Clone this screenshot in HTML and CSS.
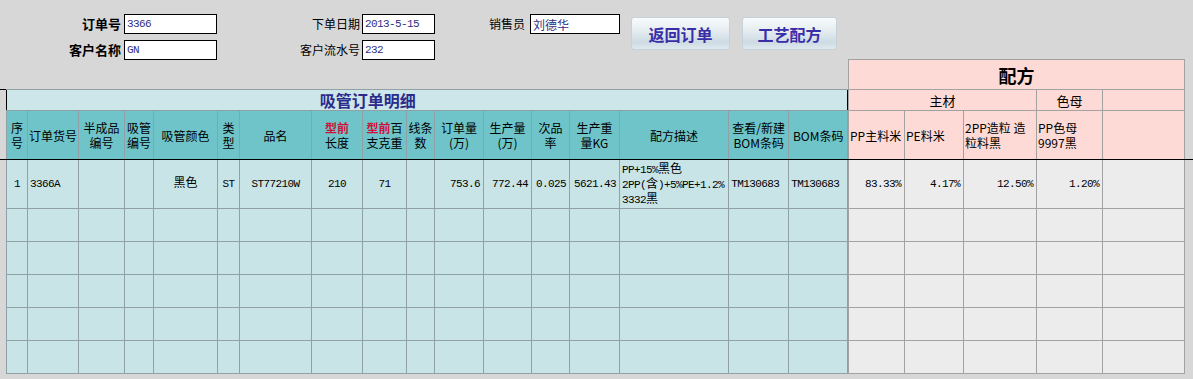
FILE: index.html
```html
<!DOCTYPE html>
<html lang="zh-CN">
<head>
  <meta charset="UTF-8">
  <title>吸管订单明细</title>
  <link rel="stylesheet" href="styles.css">
</head>
<body>
  <div class="sheet">
    <div class="left-pane">
      <div class="order-form">
        <div class="field-group group-main">
          <label class="bold">订单号</label>
          <input class="field" type="text" value="3366">
          <label class="bold">客户名称</label>
          <input class="field" type="text" value="GN">
        </div>
        <div class="field-group group-date">
          <label>下单日期</label>
          <input class="field" type="text" value="2013-5-15">
          <label>客户流水号</label>
          <input class="field" type="text" value="232">
        </div>
        <div class="field-group group-sales">
          <label>销售员</label>
          <input class="field cn-field" type="text" value="刘德华">
        </div>
        <div class="btn-group">
          <button class="btn btn-back">返回订单</button>
          <button class="btn btn-recipe">工艺配方</button>
        </div>
      </div>

      <table class="grid order-grid">
        <colgroup>
          <col style="width:21px"><col style="width:51px"><col style="width:46px"><col style="width:29px">
          <col style="width:64px"><col style="width:22px"><col style="width:72px"><col style="width:51px">
          <col style="width:44px"><col style="width:28px"><col style="width:49px"><col style="width:48px">
          <col style="width:38px"><col style="width:50px"><col style="width:109px"><col style="width:60px">
          <col style="width:59px">
        </colgroup>
        <tr class="title-row">
          <td colspan="15" class="grid-title">吸管订单明细</td>
          <td colspan="2"></td>
        </tr>
        <tr class="head-row">
          <th>序<br>号</th>
          <th>订单货号</th>
          <th>半成品<br>编号</th>
          <th>吸管<br>编号</th>
          <th>吸管颜色</th>
          <th>类<br>型</th>
          <th>品名</th>
          <th><b class="red">型前</b><br>长度</th>
          <th><b class="red">型前</b>百<br>支克重</th>
          <th>线条<br>数</th>
          <th>订单量<br>(万)</th>
          <th>生产量<br>(万)</th>
          <th>次品<br>率</th>
          <th>生产重<br>量KG</th>
          <th>配方描述</th>
          <th>查看/新建<br>BOM条码</th>
          <th>BOM条码</th>
        </tr>
        <tr class="data-row">
          <td class="c">1</td>
          <td class="l">3366A</td>
          <td></td>
          <td></td>
          <td class="c"><span class="cn">黑色</span></td>
          <td class="c">ST</td>
          <td class="c">ST77210W</td>
          <td class="c">210</td>
          <td class="c">71</td>
          <td></td>
          <td class="r">753.6</td>
          <td class="r">772.44</td>
          <td class="r">0.025</td>
          <td class="r">5621.43</td>
          <td class="l">
            <div class="desc-line">PP+15%<span class="cn">黑色</span></div>
            <div class="desc-line">2PP(<span class="cn">含</span>)+5%PE+1.2%</div>
            <div class="desc-line">3332<span class="cn">黑</span></div>
          </td>
          <td class="l">TM130683</td>
          <td class="l">TM130683</td>
        </tr>
        <tr class="empty-row"><td></td><td></td><td></td><td></td><td></td><td></td><td></td><td></td><td></td><td></td><td></td><td></td><td></td><td></td><td></td><td></td><td></td></tr>
        <tr class="empty-row"><td></td><td></td><td></td><td></td><td></td><td></td><td></td><td></td><td></td><td></td><td></td><td></td><td></td><td></td><td></td><td></td><td></td></tr>
        <tr class="empty-row"><td></td><td></td><td></td><td></td><td></td><td></td><td></td><td></td><td></td><td></td><td></td><td></td><td></td><td></td><td></td><td></td><td></td></tr>
        <tr class="empty-row"><td></td><td></td><td></td><td></td><td></td><td></td><td></td><td></td><td></td><td></td><td></td><td></td><td></td><td></td><td></td><td></td><td></td></tr>
        <tr class="empty-row"><td></td><td></td><td></td><td></td><td></td><td></td><td></td><td></td><td></td><td></td><td></td><td></td><td></td><td></td><td></td><td></td><td></td></tr>
      </table>
    </div>

    <div class="right-pane">
      <table class="grid recipe-grid">
        <colgroup>
          <col style="width:56px"><col style="width:59px"><col style="width:73px"><col style="width:66px"><col style="width:82px">
        </colgroup>
        <tr class="recipe-title">
          <td colspan="5">配方</td>
        </tr>
        <tr class="group-row">
          <td colspan="3">主材</td>
          <td>色母</td>
          <td></td>
        </tr>
        <tr class="head-row">
          <th>PP主料米</th>
          <th>PE料米</th>
          <th>2PP造粒 造<br>粒料黑</th>
          <th>PP色母<br>9997黑</th>
          <th></th>
        </tr>
        <tr class="data-row">
          <td class="r">83.33%</td>
          <td class="r">4.17%</td>
          <td class="r">12.50%</td>
          <td class="r">1.20%</td>
          <td></td>
        </tr>
        <tr class="empty-row"><td></td><td></td><td></td><td></td><td></td></tr>
        <tr class="empty-row"><td></td><td></td><td></td><td></td><td></td></tr>
        <tr class="empty-row"><td></td><td></td><td></td><td></td><td></td></tr>
        <tr class="empty-row"><td></td><td></td><td></td><td></td><td></td></tr>
        <tr class="empty-row"><td></td><td></td><td></td><td></td><td></td></tr>
      </table>
    </div>
  </div>
</body>
</html>
```

FILE: styles.css
```css
body {
  margin: 0;
  width: 1193px;
  height: 379px;
  overflow: hidden;
  font-family: "Noto Sans CJK SC", sans-serif;
  font-size: 12px;
  color: #000;
  background:
    linear-gradient(#000, #000) 0 89px / 6px 1px no-repeat,
    linear-gradient(#000, #000) 0 159px / 100% 1px no-repeat,
    #d7d7d7;
}

.sheet {
  display: flex;
  align-items: flex-start;
}

.left-pane {
  width: 848px;
  flex: none;
}
.right-pane {
  flex: none;
  margin-top: 59px;
}

/* top form */
.order-form {
  height: 89px;
  box-sizing: border-box;
  padding-top: 14px;
  display: flex;
  align-items: flex-start;
}
.field-group {
  display: grid;
  row-gap: 6px;
  align-items: center;
}
.field-group label {
  text-align: right;
  white-space: nowrap;
  line-height: 20px;
}
.field-group label.bold {
  font-weight: bold;
  font-size: 13px;
}
.group-main {
  grid-template-columns: 121px 93px;
  column-gap: 3px;
}
.group-date {
  margin-left: 43px;
  grid-template-columns: 100px 73px;
  column-gap: 2px;
}
.group-sales {
  margin-left: 54px;
  grid-template-columns: 34px 90px;
  column-gap: 7px;
}
.field {
  box-sizing: border-box;
  width: 100%;
  height: 20px;
  margin: 0;
  padding: 0 2px;
  border: 1px solid #000;
  background: #fff;
  color: #2e2e80;
  font-family: "Liberation Mono", "Noto Sans CJK SC", monospace;
  font-size: 11px;
  letter-spacing: -0.6px;
  outline: none;
}
.cn-field {
  font-family: "Noto Sans CJK SC", sans-serif;
  font-size: 12px;
  letter-spacing: 0;
}

.btn-group {
  margin-left: 11px;
  margin-top: 3px;
  display: flex;
  gap: 12px;
}
.btn {
  height: 33px;
  padding: 0;
  border: 1px solid #c6d1d8;
  border-radius: 3px;
  background: linear-gradient(#f8fbfc 0%, #e6edf1 40%, #cddbe4 78%, #dfe8ee 100%);
  color: #3a2ea8;
  font-family: "Noto Sans CJK SC", sans-serif;
  font-size: 16px;
  font-weight: bold;
  cursor: pointer;
}
.btn-back {
  width: 99px;
}
.btn-recipe {
  width: 95px;
}

/* grids */
.grid {
  border-collapse: collapse;
  table-layout: fixed;
}
.grid td,
.grid th {
  padding: 0;
  font-weight: normal;
  line-height: 15px;
  vertical-align: middle;
  overflow: hidden;
  white-space: nowrap;
}

.order-grid {
  margin-left: 6px;
  width: 842px;
  border: 1px solid #000;
}
.order-grid td,
.order-grid th {
  border: 1px solid #8fa1a4;
  background: #c9e4e7;
}
.order-grid .title-row td {
  border-left: none;
  border-right: none;
  background: #cce6ea;
}
.order-grid .grid-title {
  text-align: center;
  color: #2b2b8c;
  font-size: 16px;
  font-weight: bold;
  line-height: 20px;
}
.order-grid .head-row th {
  background: #6ec4c9;
  text-align: center;
  border-bottom: 1px solid #000;
}

.recipe-grid {
  width: 337px;
  border: 1px solid #000;
}
.recipe-grid td,
.recipe-grid th {
  border: 1px solid #a2a2a2;
  background: #ececec;
}
.recipe-grid .recipe-title td,
.recipe-grid .group-row td,
.recipe-grid .head-row th {
  background: #fedad6;
  text-align: center;
}
.recipe-grid .recipe-title td {
  font-size: 18px;
  font-weight: bold;
  line-height: 24px;
}
.recipe-grid .group-row td {
  font-size: 13px;
}
.recipe-grid .head-row th {
  text-align: left;
  padding-left: 1px;
  border-bottom: 1px solid #000;
}

.recipe-title {
  height: 30px;
}
.title-row,
.group-row {
  height: 21px;
}
.head-row,
.data-row {
  height: 49px;
}
.empty-row {
  height: 33px;
}

.data-row td {
  font-family: "Liberation Mono", "Noto Sans CJK SC", monospace;
  font-size: 11px;
  letter-spacing: -0.6px;
}
.data-row .cn {
  font-family: "Noto Sans CJK SC", sans-serif;
  font-size: 12px;
  letter-spacing: 0;
  line-height: 12px;
}
.desc-line {
  height: 15px;
  line-height: 15px;
}
.c {
  text-align: center;
}
.l {
  text-align: left;
  padding-left: 2px !important;
}
.r {
  text-align: right;
  padding-right: 3px !important;
}
.red {
  color: #d0103a;
  font-weight: bold;
}
```
